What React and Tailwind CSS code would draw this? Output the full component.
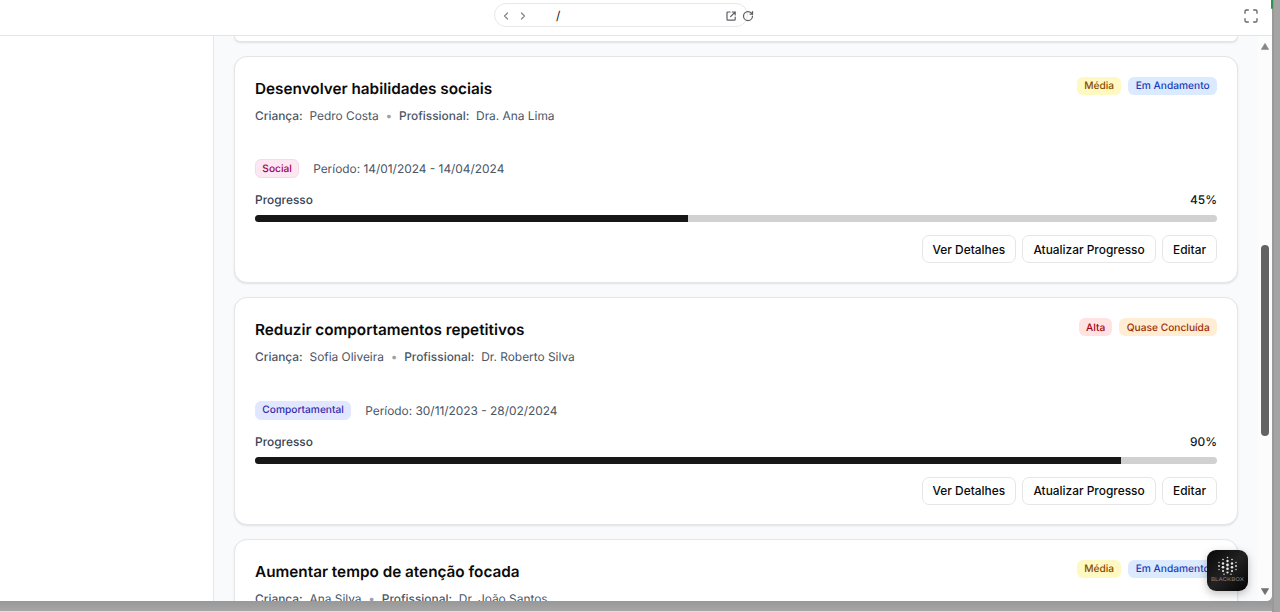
import { ChevronLeft, ChevronRight, RotateCw, Maximize } from "lucide-react";

const goals = [
  {
    title: "Desenvolver habilidades sociais",
    child: "Pedro Costa",
    professional: "Dra. Ana Lima",
    priority: "Média",
    priorityClass: "bg-[#fef9c2] text-[#894b00]",
    status: "Em Andamento",
    statusClass: "bg-[#dbeafe] text-[#193cb8]",
    area: "Social",
    areaClass: "bg-[#fce7f3] text-[#a3004c] border-[#f3dbe8]",
    period: "14/01/2024 - 14/04/2024",
    progress: 45,
  },
  {
    title: "Reduzir comportamentos repetitivos",
    child: "Sofia Oliveira",
    professional: "Dr. Roberto Silva",
    priority: "Alta",
    priorityClass: "bg-[#ffe2e2] text-[#9f0712]",
    status: "Quase Concluída",
    statusClass: "bg-[#ffedd4] text-[#9f2d00]",
    area: "Comportamental",
    areaClass: "bg-[#e0e7ff] text-[#372aac] border-[#e0e7ff]",
    period: "30/11/2023 - 28/02/2024",
    progress: 90,
  },
  {
    title: "Aumentar tempo de atenção focada",
    child: "Ana Silva",
    professional: "Dr. João Santos",
    priority: "Média",
    priorityClass: "bg-[#fef9c2] text-[#894b00]",
    status: "Em Andamento",
    statusClass: "bg-[#dbeafe] text-[#193cb8]",
  },
];

function Badge({ className, children }) {
  return (
    <span className={`flex items-center rounded-[6px] pt-0.5 text-[10.2px] font-medium whitespace-nowrap ${className}`}>
      {children}
    </span>
  );
}

function ActionButton({ children }) {
  return (
    <button className="h-7 rounded-[7px] border border-[#e6e6e8] bg-white px-[10px] pt-px text-[11.9px] font-medium whitespace-nowrap text-[#0a0a0a]">
      {children}
    </button>
  );
}

function GoalCard({ goal }) {
  return (
    <article className="h-[227.8px] shrink-0 rounded-[13px] border border-[#e4e5e7] bg-white p-5 shadow-[0_1px_2px_rgba(0,0,0,0.1)]">
      <div className="flex h-[25px] items-start justify-between">
        <h3 className="text-[15.3px] leading-[24.6px] font-semibold text-[#0a0a0a]">{goal.title}</h3>
        <div className="flex h-[18px] gap-[7px]">
          <Badge className={`px-[7.3px] ${goal.priorityClass}`}>{goal.priority}</Badge>
          <Badge className={`px-[7.3px] ${goal.statusClass}`}>{goal.status}</Badge>
        </div>
      </div>
      <div className="mt-[5.2px] flex h-[18px] items-center gap-[6.8px] text-[11.9px] leading-[18px] text-[#4a5565]">
        <span className="font-medium">Criança:</span>
        <span>{goal.child}</span>
        <span className="text-[#99a1af]">•</span>
        <span className="font-medium">Profissional:</span>
        <span>{goal.professional}</span>
      </div>
      {goal.area && (
        <>
          <div className="mt-[34.2px] flex h-[19px] items-center gap-[14px]">
            <Badge className={`h-[19px] border px-[6.3px] ${goal.areaClass}`}>{goal.area}</Badge>
            <span className="pt-px text-[11.9px] leading-[18px] text-[#4a5565]">Período: {goal.period}</span>
          </div>
          <div className="mt-[13px] flex h-[18px] items-center justify-between text-[11.9px] leading-[18px] font-medium">
            <span className="text-[#364153]">Progresso</span>
            <span className="text-[#101828]">{goal.progress}%</span>
          </div>
          <div className="mt-[6px] h-[7px] overflow-hidden rounded-full bg-[#d1d1d1]">
            <div className="h-full bg-[#171717]" style={{ width: `${goal.progress}%` }} />
          </div>
          <div className="mt-[13px] flex justify-end gap-[6.4px]">
            <ActionButton>Ver Detalhes</ActionButton>
            <ActionButton>Atualizar Progresso</ActionButton>
            <ActionButton>Editar</ActionButton>
          </div>
        </>
      )}
    </article>
  );
}

const dots = [
  [20.5, 7.5, 0.8], [16, 9.5, 0.8], [25, 9.5, 0.8], [20.5, 11, 1.2],
  [12, 12.5, 0.7], [29, 12.5, 0.7], [16, 13.5, 1.2], [25, 13.5, 1.2], [20.5, 15, 1.4],
  [12, 16, 0.9], [29, 16, 0.9], [16, 17.3, 1.3], [25, 17.3, 1.3], [20.5, 18.8, 1.3],
  [12, 19.5, 0.7], [29, 19.5, 0.7], [16, 21, 1.1], [25, 21, 1.1], [20.5, 22.5, 1.1],
  [17, 24.3, 0.7], [24, 24.3, 0.7],
];

function BlackboxBadge() {
  return (
    <div className="absolute top-[550px] left-[1207px] size-[41px] overflow-hidden rounded-[9px] bg-linear-to-br from-[#090909] via-[#222222] to-[#050505] shadow-[0_3px_8px_rgba(0,0,0,0.25)]">
      <svg viewBox="0 0 41 41" className="size-full">
        {dots.map(([x, y, r]) => (
          <circle key={`${x}-${y}`} cx={x} cy={y} r={r} fill="#e8e8e8" />
        ))}
        <text x="20.5" y="31" textAnchor="middle" textLength="33" lengthAdjust="spacingAndGlyphs" fill="#858585" fontSize="5.2" fontFamily="Inter, sans-serif">
          BLACKBOX
        </text>
      </svg>
    </div>
  );
}

export default function App() {
  return (
    <div className="relative h-[612px] w-[1280px] overflow-hidden bg-[#a2a2a2] font-['Inter',sans-serif] [text-rendering:geometricPrecision]">
      <div className="flex h-full">
        <div className="flex w-[1272px] flex-col">
          <div className="flex h-[601px] flex-col overflow-hidden rounded-br-[6px] bg-white">
            <header className="flex h-9 shrink-0 border-b border-[#e5e5e5] pl-[494px]">
              <div className="mt-[3px] flex h-6 w-[254px] items-center rounded-full border border-[#e8e8ea] pt-px pl-[5px]">
                <ChevronLeft className="size-3 shrink-0 text-[#888]" strokeWidth={2.5} />
                <ChevronRight className="ml-[5px] size-3 shrink-0 text-[#888]" strokeWidth={2.5} />
                <span className="ml-[27px] w-2.5 shrink-0 pt-px text-[12px] text-[#18181b]">/</span>
                <svg viewBox="0 0 12 12" className="ml-[159px] size-3 shrink-0" fill="none" stroke="#5d5d64" strokeWidth="1.2" strokeLinecap="round" strokeLinejoin="round">
                  <path d="M5.2 2H3Q2 2 2 3V9.2Q2 10.2 3 10.2H9.2Q10.2 10.2 10.2 9.2V7M7.2 2H10.2V5M10.2 2L5.6 6.6" />
                </svg>
                <RotateCw className="ml-[5px] size-3 shrink-0 text-[#5d5d64]" strokeWidth={2.5} />
              </div>
              <Maximize className="mt-2 ml-[495px] size-4 text-[#666]" strokeWidth={2} />
            </header>
            <div className="flex min-h-0 flex-1">
              <aside className="w-[214px] shrink-0 border-r border-[#e5e7eb] bg-white" />
              <main className="flex w-[1044px] shrink-0 flex-col gap-[13.8px] overflow-hidden bg-[#f9fafb] px-5">
                <div className="h-[5.8px] shrink-0 rounded-b-[13px] border-x border-b border-[#e4e5e7] bg-white shadow-[0_1px_2px_rgba(0,0,0,0.1)]" />
                {goals.map((goal) => (
                  <GoalCard key={goal.title} goal={goal} />
                ))}
              </main>
              <div className="flex w-3.5 flex-col items-center bg-[#fcfcfc] pt-[7px]">
                <svg viewBox="0 0 8 7" className="h-[7px] w-2 shrink-0">
                  <path d="M4 0.3 L7.8 6.5 H0.2 Z" fill="#868686" stroke="#868686" strokeWidth="0.5" strokeLinejoin="round" />
                </svg>
                <div className="mt-[195px] h-[191px] w-2 shrink-0 rounded-full bg-[#636363]" />
                <svg viewBox="0 0 8 7" className="mt-[152px] h-[7px] w-2 shrink-0">
                  <path d="M4 6.7 L7.8 0.5 H0.2 Z" fill="#707070" stroke="#707070" strokeWidth="0.5" strokeLinejoin="round" />
                </svg>
              </div>
            </div>
          </div>
          <div className="h-2.5 bg-linear-to-b from-[#989898] to-[#a6a6a6]" />
          <div className="h-px bg-[#dedede]" />
        </div>
        <div className="w-2 border-l-2 border-[#999] bg-[#a4a4a4]" />
      </div>
      <div className="absolute top-0 left-[1271px] h-[9px] w-[2px] rounded-b bg-[#2f9350]" />
      <BlackboxBadge />
    </div>
  );
}
